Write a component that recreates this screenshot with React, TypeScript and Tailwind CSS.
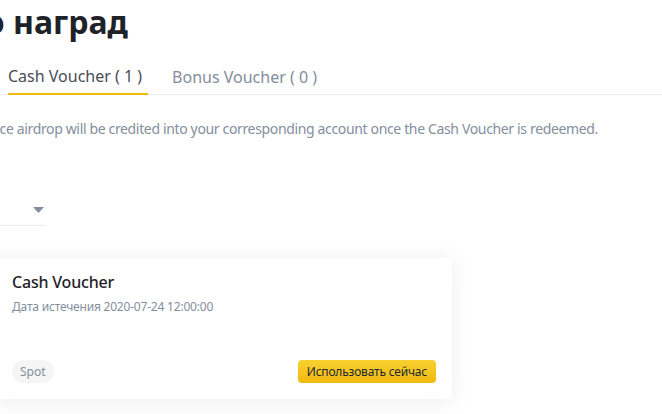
import React from "react";

export default function App() {
  const font = { fontFamily: '"Noto Sans", "Liberation Sans", sans-serif' };
  return (
    <div className="w-[662px] h-[414px] overflow-hidden bg-white" style={font}>
      {/* Title, cut by the left window edge */}
      <div className="mt-[2px] h-10 w-[128px] flex justify-end">
        <h1 className="whitespace-nowrap text-[32px] leading-10 font-bold text-[#1e2329] shrink-0">
          Бюро наград
        </h1>
      </div>

      {/* Tabs */}
      <div className="mt-[22px] flex border-b border-[#eaecef]">
        <button className="ml-2 pr-[6px] pb-[5px] border-b-2 border-[#f0b90b] -mb-px text-[16px] leading-6 text-[#474d57] whitespace-nowrap">
          Cash Voucher ( 1 )
        </button>
        <button className="ml-6 pb-[5px] text-[16px] leading-6 text-[#848e9c] whitespace-nowrap">
          Bonus Voucher ( 0 )
        </button>
      </div>

      {/* Description, cut by the left edge */}
      <div className="mt-6 w-[598px] flex justify-end">
        <p className="shrink-0 whitespace-nowrap text-[14px] leading-5 tracking-[-0.35px] text-[#848e9c]">
          Balance airdrop will be credited into your corresponding account once the Cash Voucher is redeemed.
        </p>
      </div>

      {/* Dropdown (cut) */}
      <div className="mt-[55px] w-[46px] h-8 border-b border-[#eaecef] flex items-center justify-end pr-[2px]">
        <svg width="11" height="6" viewBox="0 0 11 6">
          <path d="M0 0H11L5.5 6Z" fill="#848e9c" />
        </svg>
      </div>

      {/* Voucher card */}
      <div className="mt-8 -ml-2 w-[460px] h-[141px] bg-white rounded-[4px] shadow-[0_2px_24px_rgba(0,0,0,0.08)] pl-5 pr-4 pt-3 pb-4 flex flex-col">
        <div className="text-[16px] leading-6 font-medium tracking-[-0.2px] text-[#1e2329]">Cash Voucher</div>
        <div className="mt-[5px] text-[12px] leading-4 tracking-[-0.2px] text-[#848e9c]">Дата истечения 2020-07-24 12:00:00</div>
        <div className="mt-auto flex items-center justify-between">
          <span className="h-[23px] px-[8px] rounded-full bg-[#f5f5f5] text-[12px] leading-[23px] text-[#848e9c]">
            Spot
          </span>
          <button className="h-[23px] px-[9px] rounded-[4px] bg-gradient-to-b from-[#f8d12f] to-[#f0b90b] text-[12px] leading-[23px] tracking-[-0.2px] text-[#212833]">
            Использовать сейчас
          </button>
        </div>
      </div>
    </div>
  );
}
